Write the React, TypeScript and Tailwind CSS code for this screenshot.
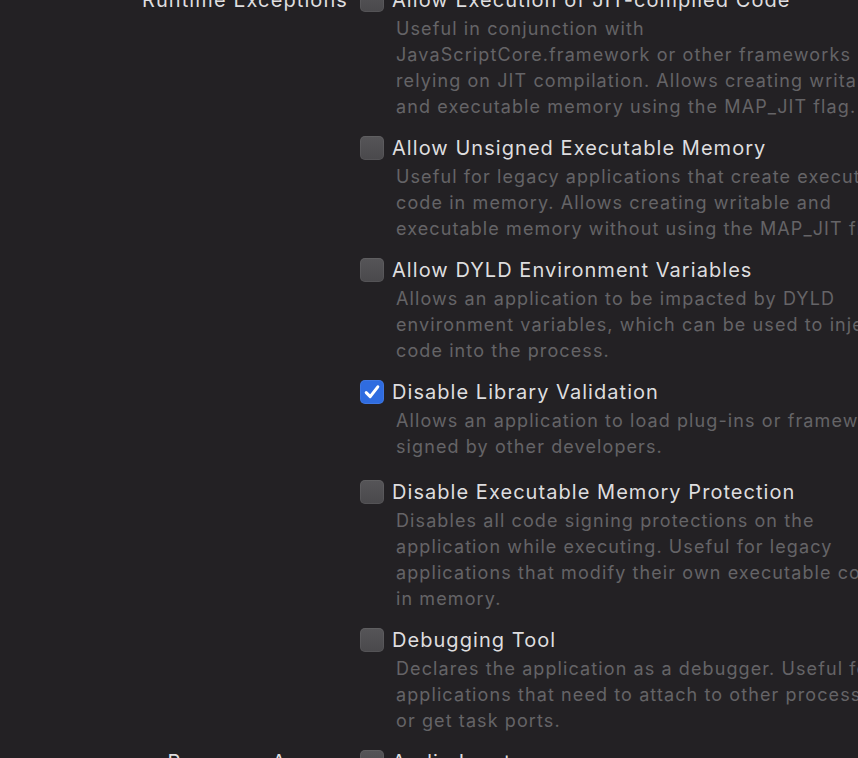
import React from "react";

type Item = { title: string; desc: string[]; checked?: boolean };

const runtime: Item[] = [
  {
    title: "Allow Execution of JIT-compiled Code",
    desc: [
      "Useful in conjunction with",
      "JavaScriptCore.framework or other frameworks",
      "relying on JIT compilation. Allows creating writable",
      "and executable memory using the MAP_JIT flag.",
    ],
  },
  {
    title: "Allow Unsigned Executable Memory",
    desc: [
      "Useful for legacy applications that create executable",
      "code in memory. Allows creating writable and",
      "executable memory without using the MAP_JIT flag.",
    ],
  },
  {
    title: "Allow DYLD Environment Variables",
    desc: [
      "Allows an application to be impacted by DYLD",
      "environment variables, which can be used to inject",
      "code into the process.",
    ],
  },
  {
    title: "Disable Library Validation",
    checked: true,
    desc: ["Allows an application to load plug-ins or frameworks", "signed by other developers."],
  },
  {
    title: "Disable Executable Memory Protection",
    desc: [
      "Disables all code signing protections on the",
      "application while executing. Useful for legacy",
      "applications that modify their own executable code",
      "in memory.",
    ],
  },
  {
    title: "Debugging Tool",
    desc: [
      "Declares the application as a debugger. Useful for",
      "applications that need to attach to other processes",
      "or get task ports.",
    ],
  },
];

function Box({ checked }: { checked?: boolean }) {
  if (checked) {
    return (
      <div className="mt-[2px] flex h-[24px] w-[24px] shrink-0 items-center justify-center rounded-[5px] bg-[#2f6ce0] shadow-[inset_0_0_0_1px_rgba(255,255,255,0.08)]">
        <svg width="20" height="20" viewBox="0 0 20 20" fill="none">
          <path d="M4.2 10.6 L8.2 14.6 L15.8 4.8" stroke="white" strokeWidth="3" strokeLinecap="round" strokeLinejoin="round" />
        </svg>
      </div>
    );
  }
  return (
    <div className="mt-[2px] h-[24px] w-[24px] shrink-0 rounded-[5px] bg-gradient-to-b from-[#565558] to-[#4a494c] shadow-[inset_0_0_0_1px_rgba(255,255,255,0.06)]" />
  );
}

function Row({ item }: { item: Item }) {
  return (
    <div className="flex items-start">
      <Box checked={item.checked} />
      <div className="ml-[8px]">
        <div className="h-[28px] whitespace-nowrap text-[20px] leading-[28px] tracking-[1.05px] text-[#dedddf]">{item.title}</div>
        <div className="ml-[4px] mt-[2px]">
          {item.desc.map((l, i) => (
            <div key={i} className="h-[26px] whitespace-nowrap text-[18px] leading-[26px] tracking-[1.1px] text-[#656467]">
              {l}
            </div>
          ))}
        </div>
      </div>
    </div>
  );
}

export default function App() {
  return (
    <div
      className="h-[758px] w-[858px] overflow-hidden bg-[#232124]"
      style={{ fontFamily: "Inter, 'Noto Sans', sans-serif" }}
    >
      <div className="-mt-[14px] flex flex-col">
        <div className="flex items-start">
          <div className="w-[348px] shrink-0 whitespace-nowrap text-right text-[20px] leading-[28px] tracking-[1.1px] text-[#dedddf]">
            Runtime Exceptions
          </div>
          <div className="ml-[12px] flex flex-col">
            {runtime.map((it, i) => (
              <div key={i} className={i === 0 ? "" : i === 4 ? "mt-[18px]" : "mt-[14px]"}>
                <Row item={it} />
              </div>
            ))}
          </div>
        </div>
        <div className="mt-[14px] flex items-start">
          <div className="w-[348px] shrink-0 whitespace-nowrap text-right text-[20px] leading-[28px] tracking-[1.1px] text-[#dedddf]">
            Resource Access
          </div>
          <div className="ml-[12px] flex flex-col">
            <Row item={{ title: "Audio Input", desc: [] }} />
          </div>
        </div>
      </div>
    </div>
  );
}
